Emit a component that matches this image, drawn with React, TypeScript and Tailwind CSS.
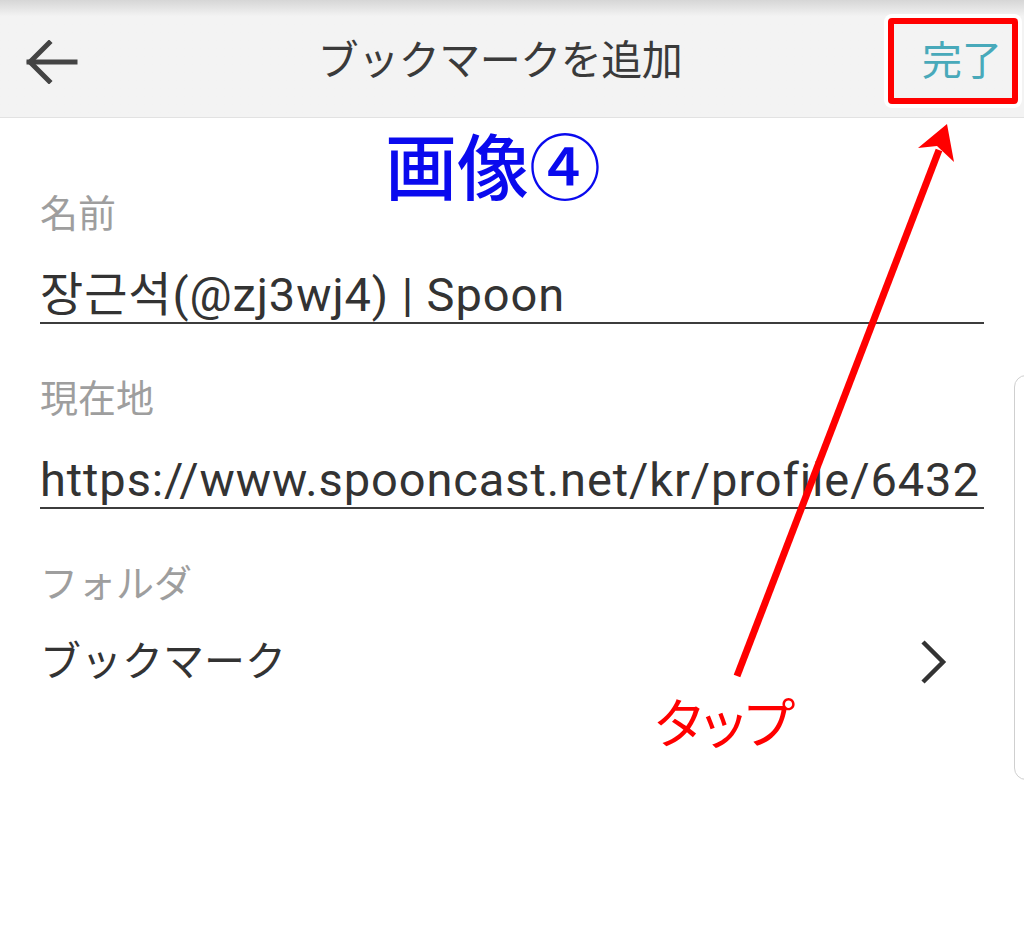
import React from 'react';

const jp = "font-['Roboto','Noto_Sans_CJK_JP','Noto_Sans_CJK_KR',sans-serif]";

function Field({ label, value }: { label: string; value: string }) {
  return (
    <div className="flex flex-col">
      <div className="h-[40px] text-[38px] leading-[40px] text-[#9e9e9e]">{label}</div>
      <div className="mt-[34px] h-[56px] overflow-hidden whitespace-nowrap border-b-[2px] border-[#3c3c3c] text-[47px] leading-[54px] tracking-[0.9px] text-[#333]">
        {value}
      </div>
    </div>
  );
}

export default function App() {
  return (
    <div className={`relative h-[950px] w-[1024px] overflow-hidden bg-white ${jp}`}>
      {/* App bar */}
      <header className="flex h-[118px] items-center border-b border-[#e2e2e2] bg-gradient-to-b from-[#d6d6d6] via-[#f3f3f3] via-[14%] to-[#f3f3f3] pt-[6px]">
        <div className="flex w-[110px] items-center pl-[26px]">
          <svg width="52" height="44" viewBox="0 0 52 44" fill="none" stroke="#444" strokeWidth="5" strokeLinecap="square">
            <path d="M3 22 H49" />
            <path d="M23 3 L4 22 L23 41" />
          </svg>
        </div>
        <div className="flex-1 text-center text-[41px] tracking-[-0.5px] text-[#3a3a3a]">ブックマークを追加</div>
        <div className="flex w-[134px] justify-end pr-[22px] text-[40px] text-[#48a9ba]">完了</div>
      </header>

      {/* Form */}
      <main className="flex flex-col gap-[55px] px-[40px] pt-[76px]">
        <Field label="名前" value="장근석(@zj3wj4) | Spoon" />
        <Field label="現在地" value="https://www.spooncast.net/kr/profile/6432" />
        <div className="flex flex-col">
          <div className="h-[40px] text-[38px] leading-[40px] text-[#9e9e9e]">フォルダ</div>
          <div className="mt-[38px] flex h-[40px] items-center justify-between text-[41px] leading-[40px] text-[#333]">
            <span>ブックマーク</span>
            <svg className="mr-[36px]" width="30" height="46" viewBox="0 0 30 46" fill="none" stroke="#333" strokeWidth="4.5">
              <path d="M5 3 L25 23 L5 43" />
            </svg>
          </div>
        </div>
      </main>

      {/* side scroll panel */}
      <div className="absolute left-[1014px] top-[375px] h-[405px] w-[30px] rounded-l-[12px] border border-[#cfcfcf] bg-white" />

      {/* Annotations */}
      <div className="absolute left-[888px] top-[18px] h-[86px] w-[130px] rounded-[4px] border-[6px] border-[#ff0000] shadow-[0_0_0_4px_#ffffff]" />
      <div className="absolute left-[385px] top-[120px] text-[72px] font-medium leading-[86px] text-[#0a0aee] font-['Noto_Sans_CJK_JP',sans-serif]">画像④</div>
      <div className="absolute left-[655px] top-[688px] text-[54px] leading-[66px] text-[#ff0000] font-['Noto_Sans_CJK_JP',sans-serif] [font-feature-settings:'palt']">タップ</div>
      <svg className="pointer-events-none absolute left-0 top-0" width="1024" height="950" viewBox="0 0 1024 950">
        <line x1="737" y1="676" x2="939" y2="150" stroke="#ff0000" strokeWidth="7" />
        <path d="M947 124 L918 148 L937 146 L954 162 Z" fill="#ff0000" />
      </svg>
    </div>
  );
}
